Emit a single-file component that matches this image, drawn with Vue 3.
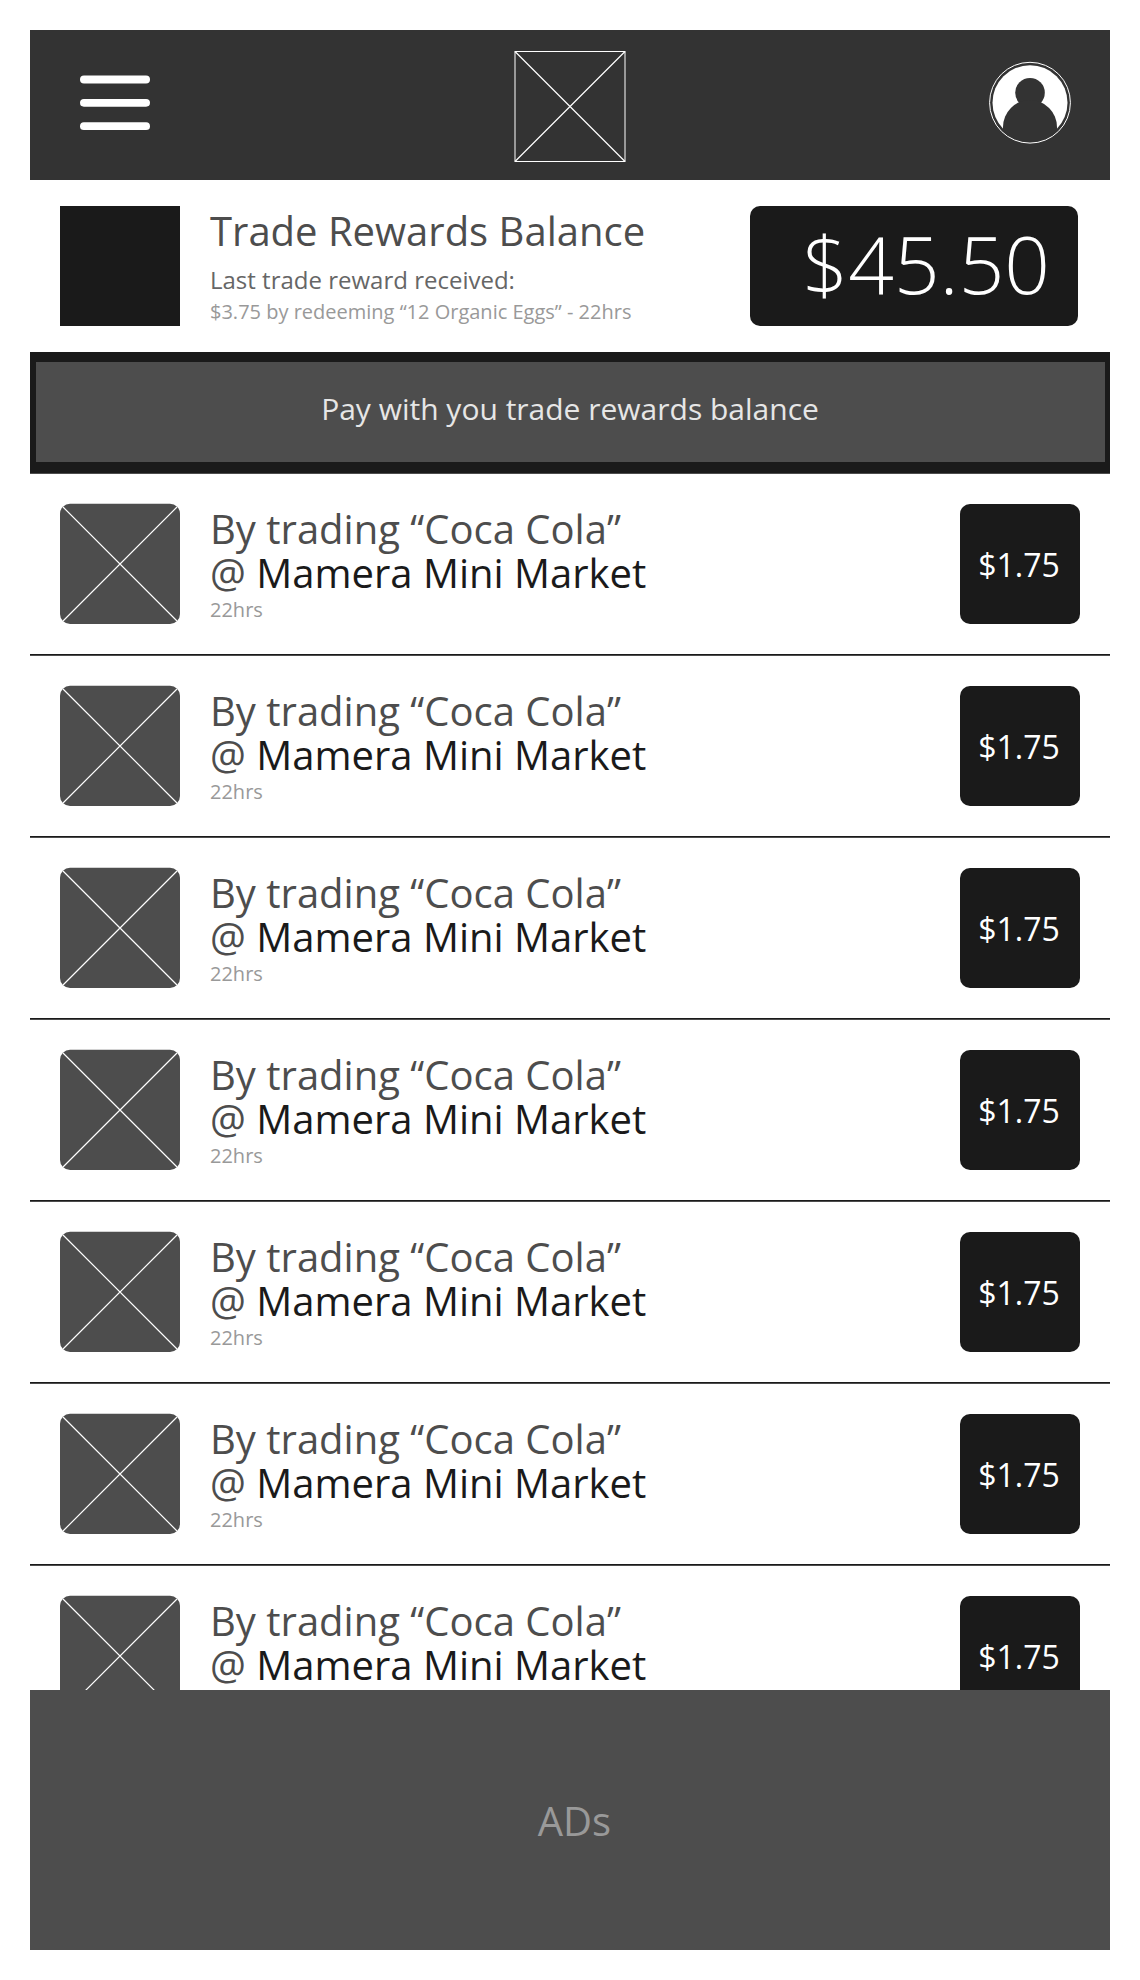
<template>
  <div class="screen">
    <header class="topbar">
      <button class="icon-btn" aria-label="Menu">
        <svg width="70" height="56" viewBox="0 0 70 56" fill="#fff">
          <rect x="0" y="0.4" width="70" height="8" rx="4" />
          <rect x="0" y="24" width="70" height="7.7" rx="3.9" />
          <rect x="0" y="47.3" width="70" height="7.7" rx="3.9" />
        </svg>
      </button>
      <svg class="logo" width="112" height="112" viewBox="0 0 112 112" fill="none" stroke="#fff">
        <rect x="1" y="0.5" width="110" height="110" />
        <path d="M1 0.5 L111 110.5 M111 0.5 L1 110.5" stroke-width="1.2" />
      </svg>
      <button class="icon-btn" aria-label="Profile">
        <svg width="84" height="84" viewBox="0 0 84 84">
          <circle cx="42" cy="41.7" r="37.5" fill="#fff" />
          <circle cx="42" cy="31.8" r="14.8" fill="#333" />
          <path d="M15 82 V66 A27 27 0 0 1 69 66 V82 Z" fill="#333" />
          <circle cx="42" cy="41.7" r="40.4" fill="none" stroke="#fff" />
        </svg>
      </button>
    </header>

    <section class="balance">
      <div class="balance-pic"></div>
      <div class="balance-info">
        <div class="balance-title">Trade Rewards Balance</div>
        <div class="balance-sub">Last trade reward received:</div>
        <div class="balance-last">$3.75 by redeeming “12 Organic Eggs” - 22hrs</div>
      </div>
      <div class="balance-amount">{{ balance }}</div>
    </section>

    <div class="pay">
      <button class="pay-btn">Pay with you trade rewards balance</button>
    </div>

    <ul class="list">
      <li v-for="item in items" :key="item.id" class="row">
        <svg class="thumb" width="120" height="121" viewBox="0 0 120 121">
          <rect x="0" y="0.75" width="120" height="120.25" rx="10" fill="#4d4d4d" />
          <path d="M3 4 L117 118 M117 4 L3 118" stroke="#fff" stroke-width="1.2" />
        </svg>
        <div class="info">
          <div class="what">By trading “{{ item.product }}”</div>
          <div class="where">@ <span class="shop">{{ item.shop }}</span></div>
          <div class="when">{{ item.time }}</div>
        </div>
        <div class="price">{{ item.price }}</div>
      </li>
    </ul>

    <footer class="ads">ADs</footer>
  </div>
</template>

<script setup>
import { ref } from 'vue'

const balance = ref('$45.50')

const items = ref(
  Array.from({ length: 7 }, (_, i) => ({
    id: i,
    product: 'Coca Cola',
    shop: 'Mamera Mini Market',
    time: '22hrs',
    price: '$1.75',
  }))
)
</script>

<style>
body {
  background: #fff;
}
</style>

<style scoped>
.screen {
  box-sizing: border-box;
  width: 1140px;
  height: 1980px;
  padding: 30px;
  display: flex;
  flex-direction: column;
  background: #fff;
  font-family: "Open Sans", "Noto Sans", sans-serif;
  color: #4d4d4d;
  white-space: nowrap;
  overflow: hidden;
}
svg {
  display: block;
  flex: none;
}
button {
  border: none;
  padding: 0;
  background: none;
  font-family: inherit;
}

/* header */
.topbar {
  flex: none;
  box-sizing: border-box;
  height: 150px;
  padding: 0 38px 0 50px;
  display: grid;
  grid-template-columns: 434px 1fr auto;
  align-items: start;
  justify-items: start;
  background: #333;
}
.topbar .icon-btn:first-child {
  margin-top: 45px;
}
.topbar .icon-btn:last-child {
  margin-top: 31px;
}
.logo {
  margin-top: 21px;
}

/* balance */
.balance {
  flex: none;
  box-sizing: border-box;
  height: 172px;
  padding: 26px 32px 26px 30px;
  display: flex;
}
.balance-pic {
  width: 120px;
  height: 120px;
  background: #1a1a1a;
}
.balance-info {
  flex: 1;
  margin-left: 30px;
}
.balance-title {
  margin-top: 1px;
  font-size: 40px;
  line-height: 48px;
}
.balance-sub {
  margin-top: 8px;
  font-size: 24px;
  line-height: 34px;
  color: #666;
}
.balance-last {
  margin-top: 3px;
  font-size: 20px;
  line-height: 24px;
  color: #999;
}
.balance-amount {
  box-sizing: border-box;
  width: 328px;
  height: 120px;
  padding-right: 28px;
  border-radius: 10px;
  background: #1a1a1a;
  color: #fff;
  font-size: 80px;
  font-weight: 300;
  line-height: 114px;
  text-align: right;
}

/* pay button */
.pay {
  flex: none;
  box-sizing: border-box;
  height: 122px;
  padding: 10px 5.5px 11px;
  background: #1a1a1a;
  border-bottom: 1px solid #4d4d4d;
}
.pay-btn {
  box-sizing: border-box;
  display: block;
  width: 100%;
  height: 100px;
  padding-bottom: 6px;
  background: #4d4d4d;
  color: #e6e6e6;
  font-size: 30px;
  line-height: 40px;
  text-align: center;
}

/* trades */
.list {
  flex: none;
  height: 1216px;
  margin: 0;
  padding: 0;
  list-style: none;
  overflow: hidden;
}
.row {
  box-sizing: border-box;
  height: 182px;
  padding: 29px 30px 0;
  display: flex;
  border-bottom: 1px solid #4d4d4d;
  box-shadow: inset 0 -1px #1a1a1a;
}
.info {
  flex: 1;
  margin: 4px 0 0 30px;
}
.what,
.where {
  font-size: 40px;
  line-height: 44px;
}
.shop {
  color: #1a1a1a;
}
.when {
  margin-top: 3px;
  font-size: 20px;
  line-height: 24px;
  color: #999;
}
.price {
  box-sizing: border-box;
  width: 120px;
  height: 120px;
  margin-top: 1px;
  padding-right: 2px;
  border-radius: 10px;
  background: #1a1a1a;
  color: #fff;
  font-size: 32px;
  line-height: 121px;
  text-align: center;
}

/* ads */
.ads {
  flex: none;
  box-sizing: border-box;
  height: 260px;
  padding-left: 9px;
  background: #4d4d4d;
  color: #999;
  font-size: 40px;
  line-height: 261px;
  text-align: center;
}
</style>
